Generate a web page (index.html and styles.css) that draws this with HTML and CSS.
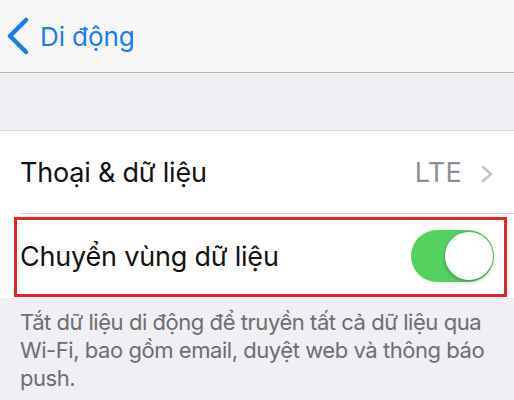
FILE: index.html
```html
<!DOCTYPE html>
<html lang="vi">
<head>
<meta charset="utf-8">
<link rel="stylesheet" href="styles.css">
</head>
<body>
<header class="nav">
  <svg class="back-icon" width="24" height="38" viewBox="0 0 24 38"><path d="M20 3 L4 19 L20 35" fill="none" stroke="#1a7cf0" stroke-width="4.5" stroke-linecap="round" stroke-linejoin="round"/></svg>
  <span class="nav-title">Di động</span>
</header>
<div class="spacer"></div>
<section class="group">
  <div class="row row-sep">
    <span class="label">Thoại &amp; dữ liệu</span>
    <span class="detail">LTE
      <svg class="chev" width="14" height="18" viewBox="0 0 14 18"><path d="M3 2 L11 9 L3 16" fill="none" stroke="#c4c4c9" stroke-width="2.4" stroke-linecap="round" stroke-linejoin="round"/></svg>
    </span>
  </div>
  <div class="row row-hl">
    <span class="label">Chuyển vùng dữ liệu</span>
    <span class="toggle"><span class="knob"></span></span>
    <span class="highlight"></span>
  </div>
</section>
<p class="footer">Tắt dữ liệu di động để truyền tất cả dữ liệu qua Wi-Fi, bao gồm email, duyệt web và thông báo push.</p>
</body>
</html>
```
FILE: styles.css
```css
* { box-sizing: border-box; }
html, body { margin: 0; padding: 0; }
body {
  width: 514px;
  height: 400px;
  overflow: hidden;
  background: #efeff4;
  font-family: Inter, "Noto Sans", "Liberation Sans", sans-serif;
}
.nav {
  height: 73px;
  background: #f7f7f8;
  border-bottom: 1px solid #b8b8bc;
  display: flex;
  align-items: center;
  padding-left: 6px;
}
.back-icon { display: block; }
.nav-title {
  margin-left: 10px;
  font-size: 26px;
  color: #1a7cf0;
  letter-spacing: -0.1px;
  padding-top: 1px;
}
.spacer { height: 57px; }
.group {
  background: #fff;
  border-top: 1px solid #d4d4d8;
}
.row {
  display: flex;
  align-items: center;
  justify-content: space-between;
  padding: 0 20px 0 20px;
  font-size: 27px;
  color: #111;
}
.row-sep {
  height: 83px;
  position: relative;
}
.row-sep::after {
  content: "";
  position: absolute;
  left: 19px;
  right: 0;
  bottom: 0;
  height: 1px;
  background: #d6d6da;
}
.label { letter-spacing: -0.2px; }
.detail {
  display: flex;
  align-items: center;
  gap: 18px;
  color: #8e8e93;
  letter-spacing: 0.3px;
}
.chev { display: block; margin-top: 2px; }
.row-hl {
  height: 84px;
  position: relative;
  padding-right: 20px;
}
.toggle {
  width: 83px;
  height: 52px;
  border-radius: 26px;
  background: #55d160;
  position: relative;
}
.knob {
  position: absolute;
  right: 1px;
  top: 2px;
  width: 48px;
  height: 48px;
  border-radius: 50%;
  background: #fff;
  box-shadow: 0 2px 4px rgba(0,0,0,0.25), 0 0 0 1px rgba(0,0,0,0.04);
}
.highlight {
  position: absolute;
  left: 14px;
  right: 7px;
  top: 3px;
  bottom: 1px;
  border: 3px solid #ec2028;
  pointer-events: none;
}
.footer {
  margin: 0;
  padding: 10px 12px 0 20px;
  font-size: 22px;
  line-height: 28px;
  color: #6d6d72;
  letter-spacing: -0.45px;
}
```
